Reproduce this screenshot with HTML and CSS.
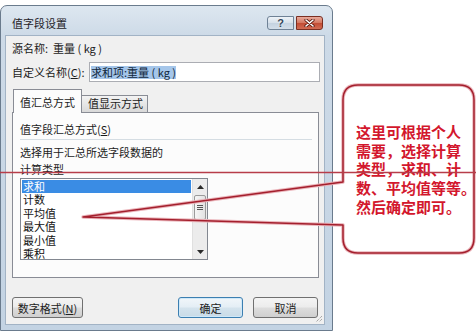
FILE: index.html
```html
<!DOCTYPE html>
<html lang="zh-CN">
<head>
<meta charset="utf-8">
<title>值字段设置</title>
<link rel="stylesheet" href="styles.css">
</head>
<body>
<div class="page">
  <div class="dialog">
    <div class="titlebar">
      <span class="title">值字段设置</span>
      <div class="caption-btns">
        <span class="cbtn help">?</span>
        <span class="cbtn close">
          <svg width="11" height="8" viewBox="0 0 11 8"><path d="M2 1 L9 7 M9 1 L2 7" stroke="#5a1a10" stroke-width="3.2" stroke-linecap="round"/><path d="M2 1 L9 7 M9 1 L2 7" stroke="#fff" stroke-width="1.6" stroke-linecap="round"/></svg>
        </span>
      </div>
    </div>
    <div class="client">
      <div class="row">源名称:  重量 ( kg )</div>
      <div class="name">
        <span class="label">自定义名称(<u>C</u>):</span>
        <div class="input"><span class="sel">求和项:重量 ( kg )</span></div>
      </div>
      <div class="tabs">
        <div class="tab active">值汇总方式</div>
        <div class="tab inactive">值显示方式</div>
      </div>
      <div class="panel">
        <div class="ptitle">值字段汇总方式(<u>S</u>)</div>
        <div class="sep"></div>
        <div class="desc">选择用于汇总所选字段数据的<br>计算类型</div>
        <div class="listbox">
          <div class="items">
            <div class="item selected">求和</div>
            <div class="item">计数</div>
            <div class="item">平均值</div>
            <div class="item">最大值</div>
            <div class="item">最小值</div>
            <div class="item">乘积</div>
          </div>
          <div class="vscroll">
            <div class="sb-btn"><svg width="7" height="4" viewBox="0 0 7 4"><path d="M0 4 L3.5 0 L7 4 Z" fill="#2a2a2a"/></svg></div>
            <div class="thumb"><span></span><span></span><span></span></div>
            <div class="track"></div>
            <div class="sb-btn"><svg width="7" height="4" viewBox="0 0 7 4"><path d="M0 0 L3.5 4 L7 0 Z" fill="#2a2a2a"/></svg></div>
          </div>
        </div>
      </div>
      <div class="btnrow">
        <div class="btn fmt">数字格式(<u>N</u>)</div>
        <div class="btn ok">确定</div>
        <div class="btn cancel">取消</div>
      </div>
      <svg class="grip" width="10" height="10" viewBox="0 0 10 10">
        <path d="M9 3 L3 9 M9 6 L6 9" stroke="#8a8a8a" stroke-width="1" stroke-dasharray="1 1"/>
      </svg>
    </div>
  </div>
</div>
<div class="callout-text">这里可根据个人<br>需要，选择计算<br>类型，求和、计<br>数、平均值等等。<br>然后确定即可。</div>
<svg class="annot" width="476" height="333" viewBox="0 0 476 333">
  <path d="M358 85 H459 Q474 85 474 100 V238 Q474 253 459 253 H358 Q343 253 343 238 V225 L83 217 L343 182 V100 Q343 85 358 85 Z" fill="none" stroke="#eab4ba" stroke-width="3.4" stroke-linejoin="round"/>
  <path d="M358 85 H459 Q474 85 474 100 V238 Q474 253 459 253 H358 Q343 253 343 238 V225 L83 217 L343 182 V100 Q343 85 358 85 Z" fill="none" stroke="#a41f2d" stroke-width="1.5" stroke-linejoin="round"/>
  <line x1="0" y1="172.5" x2="476" y2="172.5" stroke="#b73d4a" stroke-width="1.3"/>
</svg>
</body>
</html>
```

FILE: styles.css
```css
body {
  margin: 0;
  width: 476px;
  height: 333px;
  overflow: hidden;
  background: #fff;
  position: relative;
  font-family: "Noto Sans CJK SC", "Noto Sans", sans-serif;
  font-size: 11px;
  color: #1b1b1b;
}

.page {
  padding-top: 5px;
}

.dialog {
  width: 333px;
  height: 326px;
  box-sizing: border-box;
  border: 1px solid #6a7b8d;
  border-radius: 7px 7px 0 0;
  background: linear-gradient(#dde7f0, #cddae7 30px, #c3d3e3);
  display: flex;
  flex-direction: column;
}

.titlebar {
  height: 29px;
  flex: none;
  display: flex;
  align-items: flex-start;
  padding: 0 9px 0 11px;
}

.title {
  flex: 1;
  margin-top: 9px;
  line-height: 16px;
  color: #1f2328;
}

.caption-btns {
  display: flex;
  gap: 2px;
  margin-top: 10px;
}

.cbtn {
  width: 27px;
  height: 14px;
  box-sizing: border-box;
  display: flex;
  align-items: center;
  justify-content: center;
}

.help {
  border: 1px solid #6f8296;
  border-radius: 3px 0 0 3px;
  background: linear-gradient(#eef3f8, #d6e0ea 50%, #c4d2e0 51%, #d3dee9);
  font-family: "Liberation Sans", sans-serif;
  font-weight: bold;
  font-size: 11px;
  line-height: 12px;
  color: #34465a;
  text-shadow: 0 0 2px #fff;
}

.close {
  border: 1px solid #7a2f22;
  border-radius: 0 3px 3px 0;
  background: linear-gradient(#e8aa9c, #d4765f 50%, #c24c34 51%, #d26c54);
}

.client {
  flex: 1;
  margin: 0 7px 5px 4px;
  background: #f0f0f0;
  border: 1px solid #a2b3c5;
  padding: 4px 5px 0 6px;
  position: relative;
  display: flex;
  flex-direction: column;
}

.row {
  height: 16px;
  line-height: 16px;
  white-space: pre;
}

.name {
  display: flex;
  align-items: center;
  height: 20px;
  margin-top: 6px;
}

.label {
  width: 77px;
  flex: none;
}

.input {
  width: 231px;
  height: 20px;
  flex: none;
  box-sizing: border-box;
  border: 1px solid #abadb3;
  background: #fff;
  display: flex;
  align-items: center;
  padding-left: 1px;
}

.sel {
  background: #a5c6ea;
  color: #10263c;
  line-height: 13px;
  white-space: pre;
}

.tabs {
  display: flex;
  align-items: flex-end;
  height: 23px;
  margin-top: 7px;
  padding-left: 1px;
}

.tab {
  box-sizing: border-box;
  border: 1px solid #898c95;
  border-bottom: none;
  padding-left: 6px;
}

.tab.active {
  width: 69px;
  height: 24px;
  margin-bottom: -1px;
  padding-top: 4px;
  line-height: 16px;
  background: #fcfcfc;
  position: relative;
  z-index: 1;
}

.tab.inactive {
  width: 66px;
  height: 17px;
  border-left: none;
  line-height: 15px;
  background: linear-gradient(#f3f3f3, #e6e6e6 50%, #d9d9d9);
}

.panel {
  height: 166px;
  box-sizing: border-box;
  border: 1px solid #898c95;
  background: #fcfcfc;
  padding: 8px 7px 0;
}

.ptitle {
  line-height: 16px;
}

.sep {
  height: 1px;
  margin-top: 2px;
  margin-right: -1px;
  background: #d5dde3;
}

.desc {
  margin-top: 4px;
  line-height: 17px;
}

.listbox {
  width: 188px;
  height: 82px;
  box-sizing: border-box;
  border: 1px solid #828790;
  background: #fff;
  display: flex;
}

.items {
  flex: 1;
  padding: 1px;
  overflow: hidden;
}

.item {
  height: 13.4px;
  line-height: 13.4px;
  padding-left: 1px;
  color: #111;
}

.item.selected {
  background: #3a8ce4;
  color: #fff;
}

.vscroll {
  width: 15px;
  flex: none;
  box-sizing: border-box;
  background: #ececec;
  border-left: 1px solid #e0e0e0;
  display: flex;
  flex-direction: column;
}

.sb-btn {
  height: 15px;
  flex: none;
  display: flex;
  align-items: center;
  justify-content: center;
}

.thumb {
  height: 25px;
  margin: 1px 1px 0;
  box-sizing: border-box;
  border: 1px solid #9b9b9b;
  border-radius: 2px;
  background: linear-gradient(90deg, #f6f6f6, #e2e2e2);
  display: flex;
  flex-direction: column;
  align-items: center;
  justify-content: center;
  gap: 1px;
}

.thumb span {
  width: 6px;
  height: 1px;
  background: #555;
}

.track {
  flex: 1;
}

.btnrow {
  display: flex;
  height: 21px;
  margin-top: 19px;
}

.btn {
  height: 21px;
  box-sizing: border-box;
  border: 1px solid #707070;
  border-radius: 3px;
  background: linear-gradient(#f4f4f4, #ececec 48%, #dddddd 52%, #d0d0d0);
  display: flex;
  align-items: center;
  justify-content: center;
  line-height: 16px;
  color: #222;
}

.btn.fmt {
  width: 71px;
}

.btn.ok {
  width: 65px;
  margin-left: auto;
  border-color: #3c7fb1;
  background: linear-gradient(#f1f6fa, #e4eef5 48%, #d4e3ed 52%, #c9dbe7);
  box-shadow: inset 0 0 0 1px #cfe8f8;
}

.btn.cancel {
  width: 65px;
  margin-left: 10px;
  margin-right: 1px;
}

.grip {
  position: absolute;
  right: 1px;
  bottom: 1px;
}

.callout-text {
  position: absolute;
  left: 356px;
  top: 123px;
  font-weight: bold;
  font-size: 15px;
  line-height: 18.7px;
  color: #d3172d;
  white-space: nowrap;
}

.annot {
  position: absolute;
  left: 0;
  top: 0;
  pointer-events: none;
}
```
